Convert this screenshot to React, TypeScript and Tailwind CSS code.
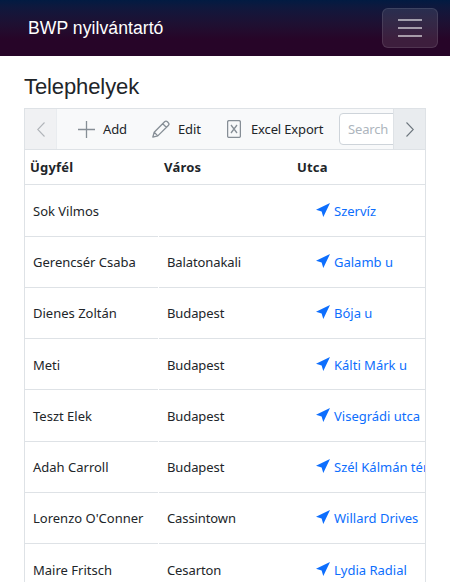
const rows = [
  { name: 'Sok Vilmos', city: '', street: 'Szervíz', h: 'h-[52px] [--drop:2px]' },
  { name: 'Gerencsér Csaba', city: 'Balatonakali', street: 'Galamb u', h: 'h-[51px] [--drop:1px]' },
  { name: 'Dienes Zoltán', city: 'Budapest', street: 'Bója u', h: 'h-[51px] [--drop:1px]' },
  { name: 'Meti', city: 'Budapest', street: 'Kálti Márk u', h: 'h-[51px] [--drop:3px]' },
  { name: 'Teszt Elek', city: 'Budapest', street: 'Visegrádi utca', h: 'h-[52px] [--drop:2px]' },
  { name: 'Adah Carroll', city: 'Budapest', street: 'Szél Kálmán tér', h: 'h-[51px] [--drop:1px]' },
  { name: "Lorenzo O'Conner", city: 'Cassintown', street: 'Willard Drives', h: 'h-[51px] [--drop:1px]' },
  { name: 'Maire Fritsch', city: 'Cesarton', street: 'Lydia Radial', h: 'h-[52px] [--drop:2px]' },
];

function Chevron({ right = false }: { right?: boolean }) {
  return (
    <svg width="8" height="15" viewBox="0 0 8 15" fill="none" stroke="currentColor" strokeWidth="1.1">
      <path d={right ? 'M.5 .5 7.3 7.5 .5 14.5' : 'M7.5 .5 .7 7.5 7.5 14.5'} />
    </svg>
  );
}

function Plus() {
  return (
    <svg width="17" height="17" viewBox="0 0 17 17" stroke="#868e96" strokeWidth="1.3" className="shrink-0">
      <path d="M8.5 0v17M0 8.5h17" />
    </svg>
  );
}

function Pencil() {
  return (
    <svg width="18" height="18" viewBox="0 0 18 18" fill="none" stroke="#868e96" strokeWidth="1.3" strokeLinejoin="round" className="shrink-0">
      <path d="M.8 17.2 2.2 12.2 12.6 1.8q1.4-1.4 2.8 0l.9.9q1.4 1.4 0 2.8L5.8 15.9ZM2.2 12.2l3.6 3.7M10.7 3.7l3.6 3.6" />
    </svg>
  );
}

function Excel() {
  return (
    <svg width="14" height="18" viewBox="0 0 14 18" fill="none" stroke="#868e96" strokeWidth="1.3" className="shrink-0">
      <rect x=".6" y=".6" width="12.8" height="16.8" rx="1.5" />
      <path d="m4 5 6 8M10 5l-6 8" />
    </svg>
  );
}

function Arrow() {
  return (
    <svg width="14" height="14" viewBox="0 0 14 14" fill="#0d6efd" className="mb-[3px] shrink-0">
      <path d="M14 0 7.3 14 5.6 8.6 0 6.8Z" />
    </svg>
  );
}

export default function App() {
  return (
    <div className="h-[582px] overflow-hidden bg-white font-['Noto_Sans',sans-serif] text-[13px] text-[#212529]">
      <header className="flex h-14 items-center justify-between bg-linear-to-b from-[#021b42] from-0% to-[#270528] to-70% pr-3 pl-7 font-['Liberation_Sans',sans-serif]">
        <span className="text-[17.6px] tracking-[0.05px] text-white">BWP nyilvántartó</span>
        <button className="flex h-10 w-14 flex-col items-center justify-center gap-1.5 rounded-md border border-white/10 bg-white/10">
          <span className="h-0.5 w-6 bg-white/55" />
          <span className="h-0.5 w-6 bg-white/55" />
          <span className="h-0.5 w-6 bg-white/55" />
        </button>
      </header>
      <main className="px-6 pt-[17px]">
        <h1 className="h-[35px] font-['Liberation_Sans',sans-serif] text-[22px] leading-[28px] tracking-[-0.1px]">Telephelyek</h1>
        <section className="h-[600px] overflow-hidden border border-[#dee2e6]">
          <div className="flex h-[41px] border-b border-[#dee2e6] bg-[#f8f9fa]">
            <div className="flex w-8 shrink-0 items-center justify-center border-r border-[#e9ecef] bg-[#f0f1f3] text-[#b0b4b9]">
              <Chevron />
            </div>
            <div className="flex min-w-0 flex-1 items-center overflow-hidden pl-[21px] tracking-[-0.15px] whitespace-nowrap">
              <Plus />
              <span className="ml-2 w-[49px] shrink-0 pt-0.5">Add</span>
              <Pencil />
              <span className="ml-2 w-[49px] shrink-0 pt-0.5">Edit</span>
              <Excel />
              <span className="ml-[10px] w-[88px] shrink-0 pt-0.5">Excel Export</span>
              <div className="flex h-8 w-40 shrink-0 items-center rounded border border-[#ced4da] bg-white pt-px pl-2 text-[#adb5bd]">Search</div>
            </div>
            <div className="flex w-8 shrink-0 items-center justify-center border-l border-[#dee2e6] bg-[#e9ecef] text-[#6c757d]">
              <Chevron right />
            </div>
          </div>
          <div className="grid h-[35px] grid-cols-[134px_133px_133px] items-center border-b border-[#dee2e6] pt-0.5 pl-[5px] font-bold tracking-[0.2px]">
            <span>Ügyfél</span>
            <span>Város</span>
            <span>Utca</span>
          </div>
          {rows.map((r) => (
            <div key={r.name} className={`${r.h} grid grid-cols-[133px_133px_134px] gap-x-px whitespace-nowrap`}>
              <div className="flex items-center border-b border-[#dee2e6] pt-(--drop) pl-2">{r.name}</div>
              <div className="flex items-center border-b border-[#dee2e6] pt-(--drop) pl-2 tracking-[-0.1px]">{r.city}</div>
              <div className="-ml-px flex items-center gap-1 overflow-hidden border-b border-[#dee2e6] pt-(--drop) pl-6 text-[#0d6efd]">
                <Arrow />
                <span>{r.street}</span>
              </div>
            </div>
          ))}
        </section>
      </main>
    </div>
  );
}
